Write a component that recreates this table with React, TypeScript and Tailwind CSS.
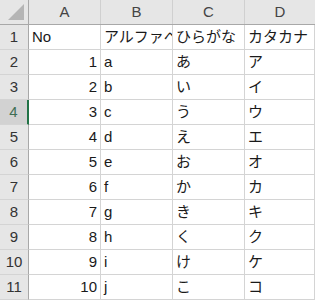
const cols = ["A", "B", "C", "D"];

const rows: { no: string; alpha: string; hira: string; kata: string }[] = [
	{ no: "No", alpha: "アルファベット", hira: "ひらがな", kata: "カタカナ" },
	{ no: "1", alpha: "a", hira: "あ", kata: "ア" },
	{ no: "2", alpha: "b", hira: "い", kata: "イ" },
	{ no: "3", alpha: "c", hira: "う", kata: "ウ" },
	{ no: "4", alpha: "d", hira: "え", kata: "エ" },
	{ no: "5", alpha: "e", hira: "お", kata: "オ" },
	{ no: "6", alpha: "f", hira: "か", kata: "カ" },
	{ no: "7", alpha: "g", hira: "き", kata: "キ" },
	{ no: "8", alpha: "h", hira: "く", kata: "ク" },
	{ no: "9", alpha: "i", hira: "け", kata: "ケ" },
	{ no: "10", alpha: "j", hira: "こ", kata: "コ" },
];

const cell = "h-[25px] border-r border-b border-[#d4d4d4] flex items-center overflow-hidden whitespace-nowrap";

export default function App() {
	return (
		<div
			className="w-[315px] h-[301px] bg-white overflow-hidden text-[15px] text-[#1a1a1a]"
			style={{ fontFamily: '"Liberation Sans", "Noto Sans CJK JP", sans-serif' }}
		>
			{/* column headers */}
			<div className="flex h-[25px] bg-[#e6e6e6] border-b border-[#a8a8a8]">
				<div className="w-[29px] shrink-0 border-r border-[#a8a8a8] relative">
					<div
						className="absolute right-[4px] bottom-[4px] w-[16px] h-[16px] bg-[#b5b5b5]"
						style={{ clipPath: "polygon(100% 0, 100% 100%, 0 100%)" }}
					/>
				</div>
				{cols.map((c, i) => (
					<div
						key={c}
						className={`${i < 3 ? "w-[72px] border-r border-[#d0d0d0]" : "flex-1"} shrink-0 flex items-center justify-center text-[#444]`}
					>
						{c}
					</div>
				))}
			</div>
			{rows.map((r, i) => {
				const sel = i === 3;
				return (
					<div key={i} className="flex">
						<div
							className={`w-[29px] shrink-0 h-[25px] border-b border-[#d4d4d4] flex items-center justify-center ${
								sel
									? "bg-[#d2d2d2] text-[#3f6e55] border-r-2 border-r-[#217346]"
									: "bg-[#e6e6e6] text-[#333] border-r border-r-[#a8a8a8]"
							}`}
						>
							{i + 1}
						</div>
						<div className={`w-[72px] shrink-0 ${cell} ${i === 0 ? "pl-[3px]" : "justify-end pr-[3px]"}`}>{r.no}</div>
						<div className={`w-[72px] shrink-0 ${cell} pl-[3px]`}>{r.alpha}</div>
						<div className={`w-[72px] shrink-0 ${cell} pl-[3px]`}>{r.hira}</div>
						<div className={`flex-1 ${cell} pl-[3px]`}>{r.kata}</div>
					</div>
				);
			})}
		</div>
	);
}
